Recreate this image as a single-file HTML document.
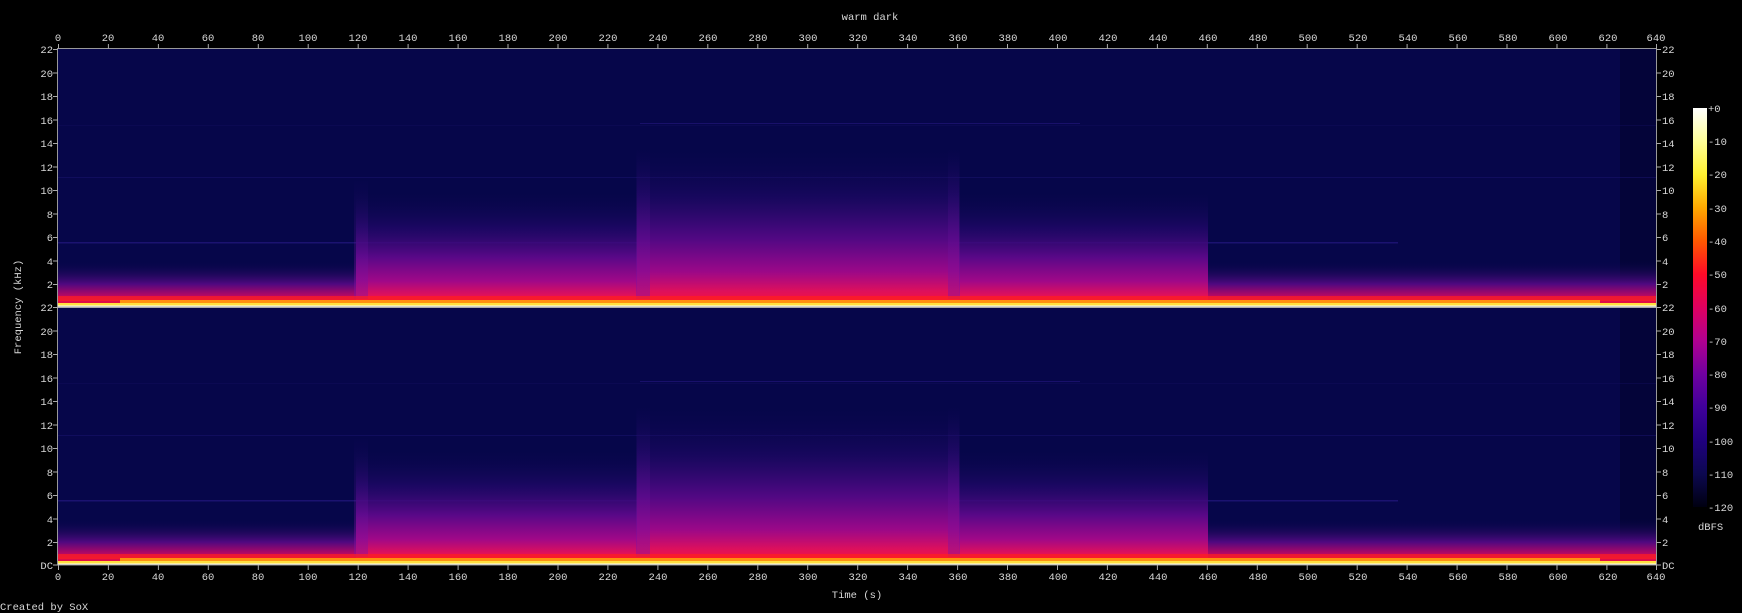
<!DOCTYPE html>
<html><head><meta charset="utf-8"><style>
html,body{margin:0;padding:0;background:#000;width:1742px;height:613px;overflow:hidden}
svg{display:block}
text{font-family:"Liberation Mono","DejaVu Sans Mono",monospace;font-size:10.5px;fill:#d8d8d8}
</style></head><body>
<svg width="1742" height="613" viewBox="0 0 1742 613" xmlns="http://www.w3.org/2000/svg">
<defs>
<linearGradient id="loud" x1="0" y1="1" x2="0" y2="0">
<stop offset="0" stop-color="#ff1030"/>
<stop offset="0.1" stop-color="#e0105a"/>
<stop offset="0.22" stop-color="#a00888"/>
<stop offset="0.42" stop-color="#5a0888"/>
<stop offset="0.68" stop-color="#280870" stop-opacity="0.6"/>
<stop offset="1" stop-color="#08084a" stop-opacity="0"/>
</linearGradient>
<linearGradient id="quiet" x1="0" y1="1" x2="0" y2="0">
<stop offset="0" stop-color="#ff1030"/>
<stop offset="0.22" stop-color="#c00860"/>
<stop offset="0.5" stop-color="#500880"/>
<stop offset="1" stop-color="#08084a" stop-opacity="0"/>
</linearGradient>
<linearGradient id="strip" x1="0" y1="1" x2="0" y2="0">
<stop offset="0" stop-color="#8a10a0" stop-opacity="0.5"/>
<stop offset="1" stop-color="#3a1090" stop-opacity="0"/>
</linearGradient>
<linearGradient id="cbar" x1="0" y1="0" x2="0" y2="1">
<stop offset="0" stop-color="#ffffff"/>
<stop offset="0.083" stop-color="#ffff98"/>
<stop offset="0.167" stop-color="#fff030"/>
<stop offset="0.25" stop-color="#ffa800"/>
<stop offset="0.333" stop-color="#ff5800"/>
<stop offset="0.417" stop-color="#ff0a28"/>
<stop offset="0.5" stop-color="#e00060"/>
<stop offset="0.583" stop-color="#b00090"/>
<stop offset="0.667" stop-color="#7000a0"/>
<stop offset="0.75" stop-color="#40009a"/>
<stop offset="0.833" stop-color="#200080"/>
<stop offset="0.917" stop-color="#0c0850"/>
<stop offset="1" stop-color="#000010"/>
</linearGradient>
<g id="panel">
<rect x="58" y="0" width="1598" height="258" fill="#06064a"/>
<rect x="1620" y="0" width="36" height="258" fill="#03032e" opacity="0.6"/>
<rect x="58" y="193" width="1340" height="1.5" fill="#2a1a8a" opacity="0.6"/>
<rect x="58" y="128" width="1598" height="1" fill="#1a1470" opacity="0.5"/>
<rect x="58" y="76" width="1598" height="1" fill="#141060" opacity="0.4"/>
<rect x="640" y="74" width="440" height="1" fill="#2a1a8a" opacity="0.5"/>
<rect x="58" y="212" width="1598" height="46" fill="url(#quiet)"/>
<rect x="356" y="140" width="852" height="118" fill="url(#loud)"/>
<rect x="637" y="95" width="322" height="163" fill="url(#loud)" opacity="0.8"/>
<rect x="636" y="100" width="14" height="150" fill="url(#strip)"/>
<rect x="948" y="100" width="12" height="150" fill="url(#strip)"/>
<rect x="354" y="130" width="14" height="120" fill="url(#strip)"/>
<rect x="58" y="247" width="1598" height="5" fill="#ff2020" opacity="0.7"/>
<rect x="120" y="251" width="1480" height="3" fill="#ff9010"/>
<rect x="58" y="254" width="1598" height="2.5" fill="#ffe040"/>
<rect x="58" y="256.5" width="1598" height="1.5" fill="#fffff0"/>
</g>
</defs>
<text x="870" y="20" text-anchor="middle">warm dark</text>
<use href="#panel" y="49"/>
<use href="#panel" y="307"/>
<rect x="58" y="306.5" width="1598" height="1.5" fill="#aaa"/>
<rect x="57.5" y="48.5" width="1599" height="516.5" fill="none" stroke="#999" stroke-width="1"/>
<g stroke="#aaa" stroke-width="1">
<path d="M58.5 44v5M108.4 44v5M158.4 44v5M208.3 44v5M258.3 44v5M308.2 44v5M358.2 44v5M408.1 44v5M458.1 44v5M508 44v5M558 44v5M607.9 44v5M657.9 44v5M707.8 44v5M757.8 44v5M807.7 44v5M857.7 44v5M907.6 44v5M957.6 44v5M1007.5 44v5M1057.5 44v5M1107.4 44v5M1157.4 44v5M1207.3 44v5M1257.3 44v5M1307.2 44v5M1357.2 44v5M1407.1 44v5M1457.1 44v5M1507 44v5M1557 44v5M1606.9 44v5M1656.5 44v5"/>
<path d="M58.5 565v5M108.4 565v5M158.4 565v5M208.3 565v5M258.3 565v5M308.2 565v5M358.2 565v5M408.1 565v5M458.1 565v5M508 565v5M558 565v5M607.9 565v5M657.9 565v5M707.8 565v5M757.8 565v5M807.7 565v5M857.7 565v5M907.6 565v5M957.6 565v5M1007.5 565v5M1057.5 565v5M1107.4 565v5M1157.4 565v5M1207.3 565v5M1257.3 565v5M1307.2 565v5M1357.2 565v5M1407.1 565v5M1457.1 565v5M1507 565v5M1557 565v5M1606.9 565v5M1656.5 565v5"/>
</g>
<g text-anchor="middle">
<text x="58" y="41">0</text><text x="108" y="41">20</text><text x="158" y="41">40</text><text x="208" y="41">60</text><text x="258" y="41">80</text><text x="308" y="41">100</text><text x="358" y="41">120</text><text x="408" y="41">140</text><text x="458" y="41">160</text><text x="508" y="41">180</text><text x="558" y="41">200</text><text x="608" y="41">220</text><text x="658" y="41">240</text><text x="708" y="41">260</text><text x="758" y="41">280</text><text x="808" y="41">300</text><text x="858" y="41">320</text><text x="908" y="41">340</text><text x="958" y="41">360</text><text x="1008" y="41">380</text><text x="1058" y="41">400</text><text x="1108" y="41">420</text><text x="1158" y="41">440</text><text x="1208" y="41">460</text><text x="1258" y="41">480</text><text x="1308" y="41">500</text><text x="1358" y="41">520</text><text x="1408" y="41">540</text><text x="1458" y="41">560</text><text x="1508" y="41">580</text><text x="1558" y="41">600</text><text x="1608" y="41">620</text><text x="1656" y="41">640</text>
</g>
<g text-anchor="middle">
<text x="58" y="580">0</text><text x="108" y="580">20</text><text x="158" y="580">40</text><text x="208" y="580">60</text><text x="258" y="580">80</text><text x="308" y="580">100</text><text x="358" y="580">120</text><text x="408" y="580">140</text><text x="458" y="580">160</text><text x="508" y="580">180</text><text x="558" y="580">200</text><text x="608" y="580">220</text><text x="658" y="580">240</text><text x="708" y="580">260</text><text x="758" y="580">280</text><text x="808" y="580">300</text><text x="858" y="580">320</text><text x="908" y="580">340</text><text x="958" y="580">360</text><text x="1008" y="580">380</text><text x="1058" y="580">400</text><text x="1108" y="580">420</text><text x="1158" y="580">440</text><text x="1208" y="580">460</text><text x="1258" y="580">480</text><text x="1308" y="580">500</text><text x="1358" y="580">520</text><text x="1408" y="580">540</text><text x="1458" y="580">560</text><text x="1508" y="580">580</text><text x="1558" y="580">600</text><text x="1608" y="580">620</text><text x="1656" y="580">640</text>
</g>
<text x="857" y="598" text-anchor="middle">Time (s)</text>
<text x="0" y="610">Created by SoX</text>
<text transform="translate(21,307) rotate(-90)" text-anchor="middle">Frequency (kHz)</text>
<g id="ylab">
<g stroke="#aaa"><path d="M53 49.5h5M53 73h5M53 96.5h5M53 120h5M53 143.5h5M53 167h5M53 190.5h5M53 214h5M53 237.5h5M53 261h5M53 284.5h5M1656 49.5h5M1656 73h5M1656 96.5h5M1656 120h5M1656 143.5h5M1656 167h5M1656 190.5h5M1656 214h5M1656 237.5h5M1656 261h5M1656 284.5h5"/></g>
<g text-anchor="end"><text x="53" y="53">22</text><text x="53" y="77">20</text><text x="53" y="100">18</text><text x="53" y="124">16</text><text x="53" y="147">14</text><text x="53" y="171">12</text><text x="53" y="194">10</text><text x="53" y="218">8</text><text x="53" y="241">6</text><text x="53" y="265">4</text><text x="53" y="288">2</text></g>
<g><text x="1662" y="53">22</text><text x="1662" y="77">20</text><text x="1662" y="100">18</text><text x="1662" y="124">16</text><text x="1662" y="147">14</text><text x="1662" y="171">12</text><text x="1662" y="194">10</text><text x="1662" y="218">8</text><text x="1662" y="241">6</text><text x="1662" y="265">4</text><text x="1662" y="288">2</text></g>
</g>
<use href="#ylab" y="258"/>
<g stroke="#aaa"><path d="M53 565h5M1656 565h5"/></g>
<text x="53" y="569" text-anchor="end">DC</text>
<text x="1662" y="569">DC</text>
<rect x="1693" y="108" width="14" height="399" fill="url(#cbar)"/>
<g><text x="1708" y="112">+0</text><text x="1708" y="145">-10</text><text x="1708" y="178">-20</text><text x="1708" y="212">-30</text><text x="1708" y="245">-40</text><text x="1708" y="278">-50</text><text x="1708" y="312">-60</text><text x="1708" y="345">-70</text><text x="1708" y="378">-80</text><text x="1708" y="411">-90</text><text x="1708" y="445">-100</text><text x="1708" y="478">-110</text><text x="1708" y="511">-120</text></g>
<text x="1698" y="530">dBFS</text>
</svg>
</body></html>
